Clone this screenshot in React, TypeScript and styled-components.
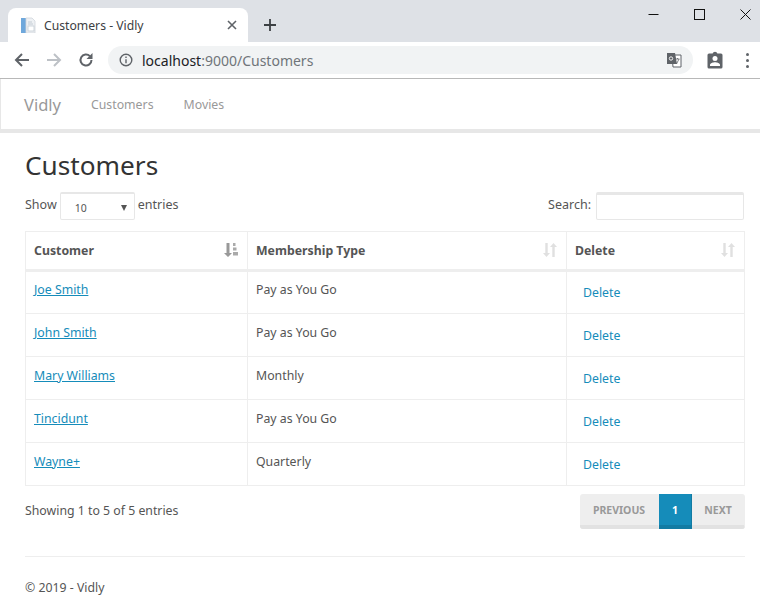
import React from 'react';
import styled, { createGlobalStyle } from 'styled-components';

const customers = [
  { name: 'Joe Smith', membership: 'Pay as You Go' },
  { name: 'John Smith', membership: 'Pay as You Go' },
  { name: 'Mary Williams', membership: 'Monthly' },
  { name: 'Tincidunt', membership: 'Pay as You Go' },
  { name: 'Wayne+', membership: 'Quarterly' },
];

const App: React.FC = () => {
  return (
    <>
      <GlobalStyle />
      <Chrome>
        <TabStrip>
          <Tab>
            <svg width="16" height="16" viewBox="0 0 16 16">
              <rect x="1" y="1" width="5" height="15" fill="#6fa8dc" />
              <path d="M6 1h6l3 3v12H6z" fill="#eef1f4" stroke="#d0d6dc" strokeWidth="0.8" />
              <rect x="8" y="9" width="6" height="5" fill="#fff" stroke="#c4ccd4" strokeWidth="0.8" />
              <path d="M8 5h4M8 7h5" stroke="#c4ccd4" strokeWidth="1" />
            </svg>
            <TabTitle>Customers - Vidly</TabTitle>
            <svg width="10" height="10" viewBox="0 0 10 10">
              <path d="M1 1l8 8M9 1l-8 8" stroke="#5f6368" strokeWidth="1.6" />
            </svg>
          </Tab>
          <NewTab>
            <svg width="12" height="12" viewBox="0 0 12 12">
              <path d="M6 0v12M0 6h12" stroke="#3c4043" strokeWidth="1.8" />
            </svg>
          </NewTab>
          <WindowButtons>
            <svg width="11" height="11" viewBox="0 0 11 11">
              <path d="M0.5 5.5h10" stroke="#111" strokeWidth="1" />
            </svg>
            <svg width="11" height="11" viewBox="0 0 11 11">
              <rect x="0.5" y="0.5" width="10" height="10" fill="none" stroke="#111" strokeWidth="1" />
            </svg>
            <svg width="11" height="11" viewBox="0 0 11 11">
              <path d="M0.5 0.5l10 10M10.5 0.5l-10 10" stroke="#111" strokeWidth="1" />
            </svg>
          </WindowButtons>
        </TabStrip>
        <Toolbar>
          <NavIcons>
            <svg width="16" height="16" viewBox="0 0 16 16">
              <path d="M15 8H2M8 2L2 8l6 6" fill="none" stroke="#5f6368" strokeWidth="2" />
            </svg>
            <svg width="16" height="16" viewBox="0 0 16 16">
              <path d="M1 8h13M8 2l6 6-6 6" fill="none" stroke="#bdc1c6" strokeWidth="2" />
            </svg>
            <svg width="16" height="16" viewBox="0 0 16 16">
              <path d="M13.5 8a5.5 5.5 0 1 1-1.6-3.9" fill="none" stroke="#5f6368" strokeWidth="2" />
              <path d="M14.5 1v6h-6z" fill="#5f6368" />
            </svg>
          </NavIcons>
          <AddressBar>
            <svg width="14" height="14" viewBox="0 0 14 14">
              <circle cx="7" cy="7" r="5.8" fill="none" stroke="#5f6368" strokeWidth="1.4" />
              <path d="M7 6.2v4M7 3.6v1.4" stroke="#5f6368" strokeWidth="1.4" />
            </svg>
            <Url>
              localhost<UrlMuted>:9000/Customers</UrlMuted>
            </Url>
            <TranslateIcon width="15" height="16" viewBox="0 0 15 16">
              <path d="M5 3h9v12H6z" fill="#fff" stroke="#5f6368" strokeWidth="1" />
              <path d="M8.5 7h4M10.5 6v1M9.5 12l2.5-5" stroke="#5f6368" strokeWidth="0.8" fill="none" />
              <path d="M0 1h8l2 11H0z" fill="#5f6368" />
              <circle cx="4" cy="6.5" r="1.7" fill="none" stroke="#fff" strokeWidth="0.9" />
            </TranslateIcon>
          </AddressBar>
          <ExtensionIcon width="16" height="18" viewBox="0 0 16 18">
            <path d="M2 2.5h3.6a2.5 2.5 0 0 1 4.8 0H14a1.5 1.5 0 0 1 1.5 1.5v12a1.5 1.5 0 0 1-1.5 1.5H2A1.5 1.5 0 0 1 .5 16V4A1.5 1.5 0 0 1 2 2.5z" fill="#5f6368" />
            <circle cx="8" cy="7.5" r="2.5" fill="#fff" />
            <path d="M3 15v-1.2c0-1.8 3.3-2.6 5-2.6s5 .8 5 2.6V15z" fill="#fff" />
          </ExtensionIcon>
          <MenuDots>
            <Dot />
            <Dot />
            <Dot />
          </MenuDots>
        </Toolbar>
      </Chrome>

      <Navbar>
        <Brand>Vidly</Brand>
        <NavLink>Customers</NavLink>
        <NavLink>Movies</NavLink>
      </Navbar>

      <Content>
        <Title>Customers</Title>
        <Controls>
          <ControlLabel>
            Show
            <LengthSelect>
              <span>10</span>
              <Caret />
            </LengthSelect>
            entries
          </ControlLabel>
          <ControlLabel>
            Search:
            <SearchInput />
          </ControlLabel>
        </Controls>

        <Table>
          <colgroup>
            <col width="222" />
            <col width="319" />
            <col width="178" />
          </colgroup>
          <thead>
            <tr>
              <HeadCell>
                Customer
                <SortIcon active />
              </HeadCell>
              <HeadCell>
                Membership Type
                <SortIcon />
              </HeadCell>
              <HeadCell>
                Delete
                <SortIcon />
              </HeadCell>
            </tr>
          </thead>
          <tbody>
            {customers.map((c) => (
              <tr key={c.name}>
                <BodyCell>
                  <CustomerLink href="#">{c.name}</CustomerLink>
                </BodyCell>
                <BodyCell>{c.membership}</BodyCell>
                <BodyCell>
                  <DeleteButton>Delete</DeleteButton>
                </BodyCell>
              </tr>
            ))}
          </tbody>
        </Table>

        <TableFooter>
          <span>Showing 1 to 5 of 5 entries</span>
          <Pagination>
            <PageButton width={79}>PREVIOUS</PageButton>
            <PageButton width={33} active>1</PageButton>
            <PageButton width={53}>NEXT</PageButton>
          </Pagination>
        </TableFooter>

        <Rule />
        <Footer>© 2019 - Vidly</Footer>
      </Content>
    </>
  );
};

export default App;

const SortIcon: React.FC<{ active?: boolean }> = ({ active }) =>
  active ? (
    <SortGlyph width="14" height="14" viewBox="0 0 14 14">
      <path d="M2.5 0h3v10H8l-4 4-4-4h2.5z" fill="#999" />
      <path d="M9 0h2.5v3H9zM9 4.5h3.5v3H9zM9 9h5v3.5H9z" fill="#aaa" />
    </SortGlyph>
  ) : (
    <SortGlyph width="14" height="14" viewBox="0 0 14 14">
      <path d="M2.3 0h2.4v10h2.3l-3.5 4-3.5-4h2.3z" fill="#e0e0e0" />
      <path d="M9.3 14h2.4V4H14l-3.5-4L7 4h2.3z" fill="#e0e0e0" />
    </SortGlyph>
  );

const GlobalStyle = createGlobalStyle`
  html, body {
    margin: 0;
    padding: 0;
    background: #fff;
  }
  body {
    font-family: "Noto Sans", "Liberation Sans", sans-serif;
    font-size: 12.3px;
    color: #555;
  }
`;

const Chrome = styled.div`
  font-family: "Noto Sans", "Liberation Sans", sans-serif;
`;
const TabStrip = styled.div`
  display: flex;
  align-items: flex-end;
  height: 42px;
  padding-left: 8px;
  background: #dee1e6;
`;
const Tab = styled.div`
  display: flex;
  align-items: center;
  width: 240px;
  height: 34px;
  padding: 0 11px 0 12px;
  box-sizing: border-box;
  background: #fff;
  border-radius: 8px 8px 0 0;
`;
const TabTitle = styled.span`
  flex: 1;
  margin-left: 8px;
  font-size: 12.2px;
  color: #3c4043;
`;
const NewTab = styled.div`
  display: flex;
  align-items: center;
  height: 34px;
  margin-left: 16px;
`;
const WindowButtons = styled.div`
  display: flex;
  align-items: center;
  gap: 35px;
  align-self: flex-start;
  margin: 9px 9px 0 auto;
`;
const Toolbar = styled.div`
  display: flex;
  align-items: center;
  height: 36px;
  background: #fff;
  border-bottom: 1px solid #b8b8b8;
  box-sizing: content-box;
`;
const NavIcons = styled.div`
  display: flex;
  align-items: center;
  gap: 16px;
  margin-left: 14px;
`;
const AddressBar = styled.div`
  display: flex;
  align-items: center;
  width: 585px;
  height: 28px;
  margin-left: 14px;
  padding-left: 11px;
  box-sizing: border-box;
  background: #f1f3f4;
  border-radius: 14px;
`;
const Url = styled.span`
  flex: 1;
  margin-left: 9px;
  font-size: 14px;
  color: #202124;
`;
const UrlMuted = styled.span`
  color: #70757a;
`;
const TranslateIcon = styled.svg`
  margin-right: 11px;
`;
const ExtensionIcon = styled.svg`
  margin-left: 14px;
`;
const MenuDots = styled.div`
  display: flex;
  flex-direction: column;
  gap: 3px;
  margin-left: 23px;
`;
const Dot = styled.span`
  width: 3px;
  height: 3px;
  border-radius: 50%;
  background: #5f6368;
`;

const Navbar = styled.nav`
  display: flex;
  align-items: center;
  height: 50px;
  padding-left: 23px;
  border-left: 1px solid #e7e7e7;
  border-bottom: 4px solid #e7e7e7;
`;
const Brand = styled.span`
  margin-right: 30px;
  font-size: 16.5px;
  color: #999;
`;
const NavLink = styled.span`
  margin-right: 30px;
  font-size: 12.3px;
  color: #999;
`;

const Content = styled.main`
  padding: 0 15px 0 25px;
`;
const Title = styled.h2`
  margin: 15px 0 10px;
  font-size: 26.2px;
  font-weight: 400;
  line-height: 34px;
  color: #333;
`;
const Controls = styled.div`
  display: flex;
  justify-content: space-between;
  align-items: flex-start;
  height: 28px;
  margin-bottom: 11px;
`;
const ControlLabel = styled.label`
  display: flex;
  align-items: flex-start;
  font-size: 12.5px;
  line-height: 26px;
`;
const LengthSelect = styled.div`
  display: flex;
  align-items: center;
  justify-content: space-between;
  width: 75px;
  height: 28px;
  margin: 0 3px 0 3px;
  padding: 3px 7px 0 14px;
  box-sizing: border-box;
  border: 1px solid #e7e7e7;
  border-top-width: 2px;
  border-radius: 2px;
  font-size: 10.5px;
`;
const Caret = styled.span`
  width: 0;
  height: 0;
  border-left: 3px solid transparent;
  border-right: 3px solid transparent;
  border-top: 6px solid #555;
`;
const SearchInput = styled.div`
  width: 148px;
  height: 28px;
  margin: 0 1px 0 5px;
  box-sizing: border-box;
  border: 1px solid #e7e7e7;
  border-top-width: 3px;
  border-radius: 2px;
`;

const Table = styled.table`
  width: 720px;
  table-layout: fixed;
  border-collapse: collapse;
`;
const HeadCell = styled.th`
  position: relative;
  height: 39px;
  padding: 0 8px;
  box-sizing: border-box;
  border: 1px solid #eee;
  border-bottom: 3px solid #eee;
  text-align: left;
  font-size: 12.3px;
  font-weight: 700;
  color: #555;
`;
const SortGlyph = styled.svg`
  position: absolute;
  top: 11px;
  right: 9px;
`;
const BodyCell = styled.td`
  height: 43px;
  padding: 0 8px 6px;
  box-sizing: border-box;
  border: 1px solid #eee;
  font-size: 12.3px;
  color: #555;
`;
const CustomerLink = styled.a`
  color: #158cba;
  text-decoration: underline;
`;
const DeleteButton = styled.span`
  position: relative;
  top: 3px;
  padding-left: 8px;
  color: #158cba;
`;

const TableFooter = styled.div`
  display: flex;
  justify-content: space-between;
  align-items: flex-start;
  margin-top: 8px;
  font-size: 12.3px;
  line-height: 34px;
`;
const Pagination = styled.div`
  display: flex;
  height: 35px;
  border-radius: 3px;
  overflow: hidden;
`;
const PageButton = styled.span<{ active?: boolean; width: number }>`
  display: flex;
  align-items: center;
  justify-content: center;
  width: ${(props) => props.width}px;
  box-sizing: border-box;
  background: ${(props) => (props.active ? '#158cba' : '#eee')};
  border-bottom: 4px solid ${(props) => (props.active ? '#127ba3' : '#e2e2e2')};
  border-right: 1px solid ${(props) => (props.active ? '#127ba3' : 'transparent')};
  font-size: 10.5px;
  font-weight: 700;
  color: ${(props) => (props.active ? '#fff' : '#999')};
`;
const Rule = styled.hr`
  height: 1px;
  margin: 27px 0 0;
  border: 0;
  background: #eee;
`;
const Footer = styled.footer`
  margin-top: 22px;
  font-size: 12.3px;
`;
